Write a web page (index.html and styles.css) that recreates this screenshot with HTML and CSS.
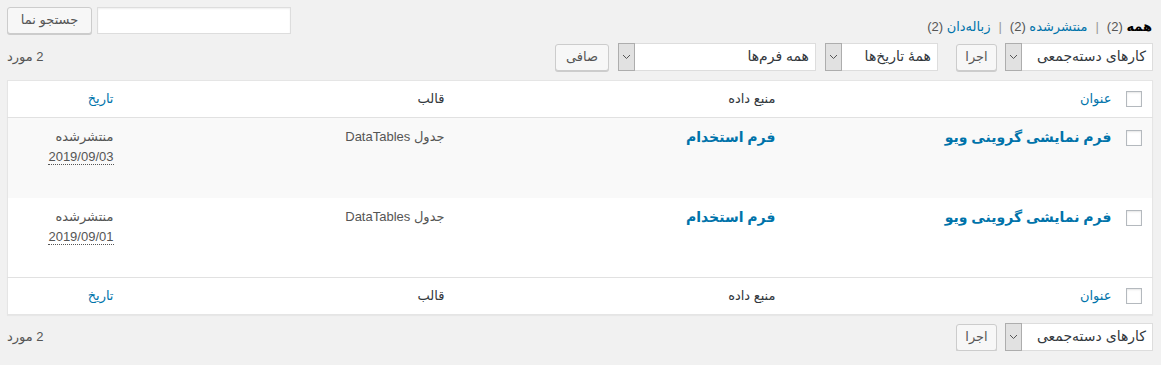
FILE: index.html
```html
<!DOCTYPE html>
<html lang="fa" dir="rtl">
<head>
  <meta charset="UTF-8" />
  <title>فرم‌ها</title>
  <link rel="stylesheet" href="styles.css">
</head>
<body>
  <div class="wrap">

    <!-- Views + search -->
    <div class="top-bar">
      <ul class="subsubsub">
        <li class="current">همه <span class="count">(2)</span></li>
        <li class="sep">|</li>
        <li><a href="#">منتشرشده <span class="count">(2)</span></a></li>
        <li class="sep">|</li>
        <li><a href="#">زباله‌دان <span class="count">(2)</span></a></li>
      </ul>
      <div class="search-box">
        <input type="text" class="search-input" />
        <span class="button">جستجو نما</span>
      </div>
    </div>

    <!-- Top tablenav -->
    <div class="tablenav tablenav-top">
      <div class="actions">
        <div class="fake-select bulk">
          <span class="label">کارهای دسته‌جمعی</span>
          <span class="arrow"><svg width="9" height="6" viewBox="0 0 9 6"><polyline points="1,1 4.5,4.5 8,1" fill="none" stroke="#555" stroke-width="1"/></svg></span>
        </div>
        <span class="button">اجرا</span>
      </div>
      <div class="actions filters">
        <div class="fake-select dates">
          <span class="label">همهٔ تاریخ‌ها</span>
          <span class="arrow"><svg width="9" height="6" viewBox="0 0 9 6"><polyline points="1,1 4.5,4.5 8,1" fill="none" stroke="#555" stroke-width="1"/></svg></span>
        </div>
        <div class="fake-select forms">
          <span class="label">همه فرم‌ها</span>
          <span class="arrow"><svg width="9" height="6" viewBox="0 0 9 6"><polyline points="1,1 4.5,4.5 8,1" fill="none" stroke="#555" stroke-width="1"/></svg></span>
        </div>
        <span class="button">صافی</span>
      </div>
      <div class="displaying-num">2 مورد</div>
    </div>

    <!-- List table -->
    <table class="list-table">
      <colgroup>
        <col class="col-cb">
        <col class="col-title">
        <col class="col-source">
        <col class="col-template">
        <col class="col-date">
      </colgroup>
      <thead>
        <tr>
          <th class="check-column"><span class="checkbox"></span></th>
          <th><a href="#">عنوان</a></th>
          <th>منبع داده</th>
          <th>قالب</th>
          <th><a href="#">تاریخ</a></th>
        </tr>
      </thead>
      <tbody>
        <tr class="alternate">
          <td class="check-column"><span class="checkbox"></span></td>
          <td><a href="#" class="row-title">فرم نمایشی گروینی ویو</a></td>
          <td><a href="#" class="row-title">فرم استخدام</a></td>
          <td class="template">جدول DataTables</td>
          <td class="date">منتشرشده<br><abbr>2019/09/03</abbr></td>
        </tr>
        <tr>
          <td class="check-column"><span class="checkbox"></span></td>
          <td><a href="#" class="row-title">فرم نمایشی گروینی ویو</a></td>
          <td><a href="#" class="row-title">فرم استخدام</a></td>
          <td class="template">جدول DataTables</td>
          <td class="date">منتشرشده<br><abbr>2019/09/01</abbr></td>
        </tr>
      </tbody>
      <tfoot>
        <tr>
          <th class="check-column"><span class="checkbox"></span></th>
          <th><a href="#">عنوان</a></th>
          <th>منبع داده</th>
          <th>قالب</th>
          <th><a href="#">تاریخ</a></th>
        </tr>
      </tfoot>
    </table>

    <!-- Bottom tablenav -->
    <div class="tablenav tablenav-bottom">
      <div class="actions">
        <div class="fake-select bulk">
          <span class="label">کارهای دسته‌جمعی</span>
          <span class="arrow"><svg width="9" height="6" viewBox="0 0 9 6"><polyline points="1,1 4.5,4.5 8,1" fill="none" stroke="#555" stroke-width="1"/></svg></span>
        </div>
        <span class="button">اجرا</span>
      </div>
      <div class="displaying-num">2 مورد</div>
    </div>

  </div>
</body>
</html>
```

FILE: styles.css
```css
* { margin: 0; padding: 0; box-sizing: border-box; }

body {
  background: #f1f1f1;
  color: #444;
  font-family: "Liberation Sans", "DejaVu Sans", sans-serif;
  font-size: 13px;
  line-height: 1.4;
  direction: rtl;
}

a { color: #0073aa; text-decoration: none; }

.wrap {
  padding: 7px 8px 0 7px;
}

/* top bar */
.top-bar {
  display: flex;
  justify-content: space-between;
  align-items: flex-start;
  height: 36px;
}

.subsubsub {
  list-style: none;
  display: flex;
  gap: 8px;
  margin-top: 11px;
  margin-right: 1px;
  color: #555;
  font-size: 13px;
}

.subsubsub .current { color: #000; font-weight: bold; }
.subsubsub .current .count { font-weight: normal; color: #555; }
.subsubsub a .count { color: #555; }
.subsubsub .sep { color: #999; }

.search-box {
  display: flex;
  gap: 5px;
}

.search-input {
  width: 194px;
  height: 27px;
  border: 1px solid #ddd;
  background: #fff;
  box-shadow: inset 0 1px 2px rgba(0, 0, 0, 0.07);
}

.button {
  display: inline-flex;
  align-items: center;
  justify-content: center;
  height: 27px;
  padding: 0 10px;
  background: #f7f7f7;
  border: 1px solid #ccc;
  border-radius: 3px;
  box-shadow: 0 1px 0 #ccc;
  color: #555;
  font-size: 13px;
  white-space: nowrap;
}

.search-box .button { width: 85px; }

/* tablenav */
.tablenav {
  display: flex;
  align-items: center;
  height: 28px;
}

.tablenav-top { margin-bottom: 9px; }
.tablenav-bottom { margin-top: 8px; }

.actions {
  display: flex;
  align-items: center;
  gap: 8px;
  margin-left: 18px;
}

.actions.filters { gap: 9px; margin-left: 9px; }

.actions .button { width: 41px; padding: 0; }
.actions.filters .button { width: 54px; }

.fake-select {
  display: flex;
  align-items: stretch;
  height: 28px;
  background: #fff;
  border: 1px solid #ddd;
  color: #32373c;
  font-size: 14px;
}

.fake-select .label {
  flex: 1;
  display: flex;
  align-items: center;
  padding: 0 6px 0 4px;
  white-space: nowrap;
}

.fake-select .arrow {
  width: 17px;
  display: flex;
  align-items: center;
  justify-content: center;
  background: #e1e1e1;
  border: 1px solid #adadad;
  margin: -1px;
}

.fake-select.bulk { width: 148px; }
.fake-select.dates { width: 113px; }
.fake-select.forms { width: 198px; }

.displaying-num {
  margin-right: auto;
  color: #555;
  font-size: 13px;
}

/* list table */
.list-table {
  width: 100%;
  table-layout: fixed;
  border-collapse: collapse;
  background: #fff;
  border: 1px solid #e5e5e5;
  box-shadow: 0 1px 1px rgba(0, 0, 0, 0.04);
}

.col-cb { width: 31px; }
.col-title { width: 336px; }
.col-source { width: 331px; }
.col-template { width: 331px; }
.col-date { width: auto; }

.list-table th {
  height: 37px;
  padding: 0 10px;
  text-align: right;
  font-weight: normal;
  color: #32373c;
  font-size: 13px;
  vertical-align: middle;
}

.list-table thead tr { border-bottom: 1px solid #e1e1e1; }
.list-table tfoot tr { border-top: 1px solid #e1e1e1; }

.list-table td {
  height: 80px;
  padding: 9px 10px;
  vertical-align: top;
  color: #555;
  font-size: 13px;
  line-height: 20px;
}

.list-table tr.alternate td { background: #f9f9f9; }

.check-column { padding: 0 10px 0 0 !important; }
.list-table td.check-column { padding-top: 12px !important; }

.checkbox {
  display: block;
  width: 16px;
  height: 16px;
  background: #fff;
  border: 1px solid #b4b9be;
  box-shadow: inset 0 1px 2px rgba(0, 0, 0, 0.1);
}

.row-title {
  font-weight: bold;
  font-size: 14px;
}

.list-table td.template { font-size: 13px; }

.date abbr {
  text-decoration: none;
  border-bottom: 1px dotted #555;
}
```
